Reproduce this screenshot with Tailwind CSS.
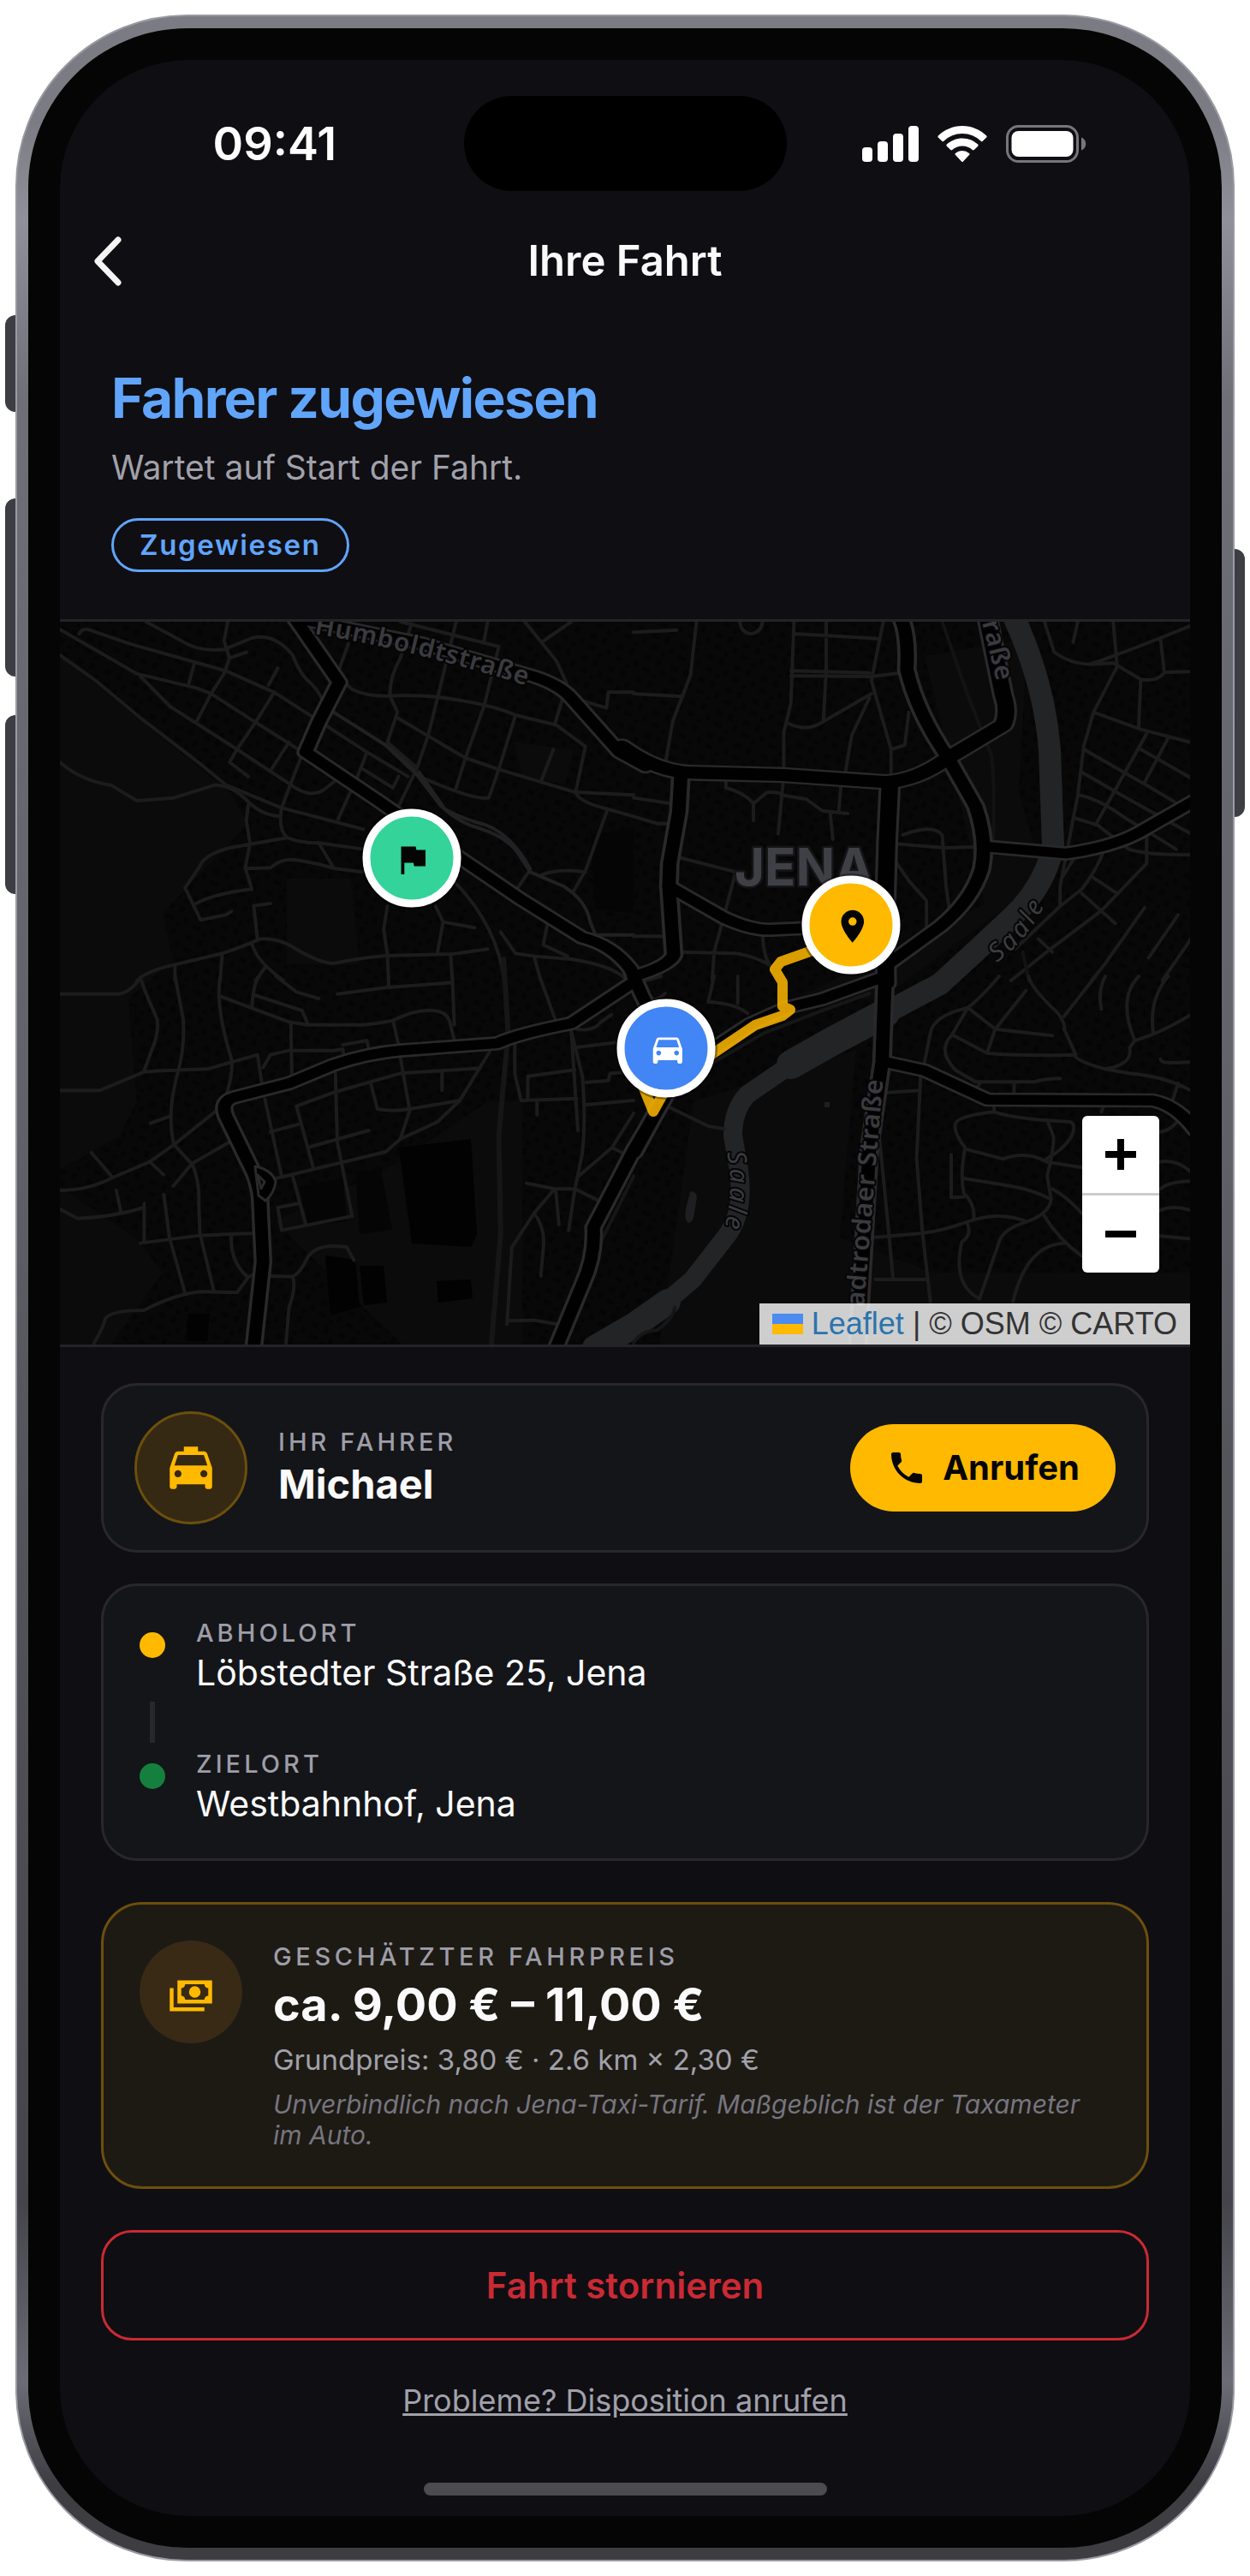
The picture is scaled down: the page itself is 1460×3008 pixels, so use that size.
<!DOCTYPE html>
<html lang="de">
  <head>
    <meta charset="UTF-8" />
    <meta name="viewport" content="width=device-width, initial-scale=1.0" />
    <title>Ihre Fahrt</title>
    <script src="https://cdn.jsdelivr.net/npm/@tailwindcss/browser@4"></script>
  </head>
  <body class="bg-white px-[18px] py-[17px] font-['Inter',sans-serif]">
    <div class="relative">
      <!-- side buttons -->
      <div class="absolute -left-3 top-[351px] h-[113px] w-4 rounded-l-xl bg-[#3d3e43]"></div>
      <div class="absolute -left-3 top-[565px] h-[208px] w-4 rounded-l-xl bg-[#3d3e43]"></div>
      <div class="absolute -left-3 top-[818px] h-[209px] w-4 rounded-l-xl bg-[#3d3e43]"></div>
      <div class="absolute -right-3 top-[624px] h-[313px] w-4 rounded-r-xl bg-[#3d3e43]"></div>

      <div
        class="relative rounded-[200px] border-2 border-[#9a9aa4] bg-[linear-gradient(180deg,#7b7b83_0%,#7b7b83_4%,#90909a_8%,#6f6f78_15%,#66666f_32%,#62626b_42%,#55565b_56%,#4a4a50_75%,#44444a_86%,#6c6c76_93%,#3d3d42_97%,#3d3d42_100%)] px-[13px] py-[14px]"
      >
        <div class="rounded-[186px] bg-[#050505] p-[37px]">
          <main class="overflow-hidden rounded-[150px] bg-[#0f0e13] text-[#fafafa]">
            <!-- status bar -->
            <div class="grid grid-cols-[1fr_377px_1fr] items-center pt-[42px]">
              <div class="pl-[30px] text-center text-[54px] font-semibold leading-[60px] text-white">
                09:41
              </div>
              <div class="h-[111px] rounded-full bg-black"></div>
              <div class="flex items-center justify-center gap-[22px] pr-8">
                <svg class="h-[42px] w-[66px]" viewBox="0 0 66 42" fill="#fff" aria-hidden="true">
                  <rect x="0" y="25" width="12" height="17" rx="4" />
                  <rect x="18" y="18" width="12" height="24" rx="4" />
                  <rect x="36" y="9" width="12" height="33" rx="4" />
                  <rect x="54" y="0" width="12" height="42" rx="4" />
                </svg>
                <svg class="h-[42px] w-[58px]" viewBox="0 0 58 42" fill="#fff" aria-hidden="true">
                  <path d="M29 0C18 0 8 4.500.8 11.500a1.500 1.500 0 0 0 0 2l4.400 4.300a1.500 1.500 0 0 0 2.100 0A31 31 0 0 1 29 9a31 31 0 0 1 21.700 8.800 1.500 1.500 0 0 0 2.100 0l4.400-4.300a1.500 1.500 0 0 0 0-2C50 4.500 40 0 29 0z" />
                  <path d="M29 14.500c-7 0-13.400 2.700-18.200 7.100a1.500 1.500 0 0 0 0 2.100l4.500 4.300a1.500 1.500 0 0 0 2 0A17.500 17.500 0 0 1 29 23.500c4.500 0 8.600 1.700 11.700 4.500a1.500 1.500 0 0 0 2 0l4.500-4.300a1.500 1.500 0 0 0 0-2.100A26.500 26.500 0 0 0 29 14.500z" />
                  <path d="M29 29c-3 0-5.800 1.100-8 2.900a1.400 1.400 0 0 0 0 2.100l7 7.400a1.400 1.400 0 0 0 2 0l7-7.400a1.400 1.400 0 0 0 0-2.100A12.500 12.500 0 0 0 29 29z" />
                </svg>
                <svg class="h-[44px] w-[94px]" viewBox="0 0 94 44" aria-hidden="true">
                  <rect x="1.500" y="1.500" width="82" height="41" rx="13" fill="none" stroke="#77777b" stroke-width="3" />
                  <rect x="6.500" y="7" width="72" height="30" rx="8" fill="#fff" />
                  <path d="M88 14.500c3 1 5.200 4 5.200 7.500S91 28.500 88 29.500z" fill="#77777b" />
                </svg>
              </div>
            </div>

            <!-- navigation -->
            <nav class="grid h-[164px] grid-cols-[1fr_auto_1fr] items-center px-[34px]">
              <button type="button" aria-label="Zurück" class="flex h-[66px] w-[44px] items-center justify-center">
                <svg class="h-[60px] w-[36px]" viewBox="0 0 36 60" fill="none" stroke="#f4f4f4" stroke-width="7" stroke-linecap="round" stroke-linejoin="round">
                  <path d="M30 5L6 30l24 25" />
                </svg>
              </button>
              <div class="text-[49px] font-semibold leading-[60px]">Ihre Fahrt</div>
            </nav>

            <!-- ride status -->
            <header class="border-b-[3px] border-[#242427] px-[60px] pb-[55px] pt-[39px]">
              <h1 class="text-[64px] font-bold leading-[78px] tracking-tight text-[#60a5fa]">Fahrer zugewiesen</h1>
              <p class="mt-[18px] text-[39px] leading-[48px] text-[#a1a1aa]">Wartet auf Start der Fahrt.</p>
              <span class="mt-[35px] inline-flex h-[63px] items-center rounded-full border-[3px] border-[#60a5fa] px-[30px] text-[33px] font-semibold leading-none tracking-wider text-[#60a5fa]">Zugewiesen</span>
            </header>

            <!-- map -->
            <section aria-label="Karte" class="relative h-[847px] overflow-hidden border-b-[3px] border-[#242427] bg-[#070707]">
              <svg class="h-full w-full" viewBox="0 0 1320 844" preserveAspectRatio="xMidYMid slice" fill="none" stroke-linecap="round" stroke-linejoin="round">
                <defs>
                  <pattern id="houses" width="34" height="28" patternUnits="userSpaceOnUse" patternTransform="rotate(22)">
                    <path fill="#050505" d="M2 3h8v6H2zM17 2h6v8h-6zM27 13h5v7h-5zM5 17h9v5H5zM19 21h5v5h-5z" />
                  </pattern>
                  <path id="p-humboldt" d="M297 14Q430 36 580 86" />
                  <path id="p-camburg" d="M1077 1Q1086 34 1101 100" />
                  <path id="p-saale-n" d="M1094 398Q1138 368 1164 300" />
                  <path id="p-saale-s" d="M779 620Q790 668 770 730" />
                  <path id="p-stadtroda" d="M939 800L966 480" />

                  <!-- street grid, one group per tile -->
                  <g id="major-nw">
                    <path d="M655 20L775 245L720 385L685 490L880 660L1100 860L1270 1010L1430 1140Q1510 1165 1560 1250L1590 1340L1650 1500" />
                    <path d="M660 20L1000 110L1300 225Q1370 255 1400 300L1530 490L1600 540" />
                  </g>
                  <g id="major-ne">
                    <path d="M680 20Q700 80 695 200Q720 350 800 510L870 680Q900 800 885 900Q860 1010 780 1100L640 1240" />
                    <path d="M120 580L115 700L92 880L90 960L102 1200Q90 1240 0 1275" />
                    <path d="M90 960L230 1070Q300 1115 350 1112L460 1105" />
                    <path d="M890 820L1100 845Q1230 820 1300 760L1440 650" />
                  </g>
                  <g id="main-ne">
                    <path d="M-30 470Q60 560 150 562L380 570L640 595Q720 590 800 510L940 395Q955 350 940 290L900 20" />
                    <path d="M652 600L645 800L640 1040L642 1300" />
                  </g>
                  <g id="major-sw">
                    <path d="M1568 20L1400 165Q1260 200 1200 235L940 260Q850 270 760 310L640 375L490 425Q455 440 470 490L545 690Q560 740 562 780L570 1000L545 1300" />
                    <path d="M1650 430L1568 610L1460 880Q1465 980 1430 1080L1360 1300" />
                  </g>
                  <g id="major-se">
                    <path d="M640 0L480 80L390 110L300 165L150 300L80 420L0 620" />
                    <path d="M640 0L632 300L600 600L570 1300" />
                    <path d="M640 300L740 330L900 432L1320 435Q1380 450 1430 540" />
                  </g>
                </defs>

                <rect width="1320" height="844" fill="#080808" />
                <rect width="1320" height="844" fill="url(#houses)" />
                <path fill="#0b0b0b" d="M0 39L200 200L220 236L120 340L132 396L80 440L90 560L70 600L0 640zM265 300L340 300L350 400L265 400zM1010 40L1130 20L1120 200L1150 300L960 440L860 440L1080 330zM740 560L930 500L900 844L700 844zM860 700L1020 760L1320 760V844H800zM530 140L600 150L590 190L540 180zM0 660L90 720L120 760L60 844H0zM500 560L540 560V844H400L250 700L380 640z" />
                <path fill="#020202" d="M396 614L480 604L487 716L480 730L411 726zM310 740L345 745L350 800L316 810zM350 752L378 752L382 795L355 798zM150 808L175 808L172 840H148zM440 770L480 768L482 790L442 795z" />
                <path fill="#050505" d="M620 250L670 240V340L625 335zM345 642L375 640L388 710L350 715zM280 660L330 650L335 700L290 705z" />

                <!-- river -->
                <g stroke="#232426">
                  <path stroke-width="26" d="M1112 -10Q1150 70 1156 150L1160 262Q1150 310 1111 346L1065 389L1028 423L964 457" />
                  <path stroke-width="34" d="M964 457L900 491L854 517" />
                  <path stroke-width="22" d="M854 517L803 552Q786 570 786 600L793 640Q800 690 778 718L739 768L698 803" />
                  <path stroke-width="30" d="M710 794L670 822L625 848" />
                </g>
                <path fill="#1f1f21" d="M736 666q6-3 8 6l-3 18q-1 12-7 12-5-3-3-16zM893 561h6v6h-6z" />

                <!-- side streets -->
                <g stroke="#1c1c1d" stroke-width="4">
                  <g transform="translate(-10 -11) scale(.4337 .3333)">
                    <path vector-effect="non-scaling-stroke" d="M23 60L230 215L390 265L430 285L550 385L665 480M75 75Q85 50 110 65L210 110L470 205L600 280L720 380L850 490L960 575M23 150L120 240L240 370L400 530L470 605L620 685L840 760M255 33L350 100Q400 140 465 130L540 90Q600 70 650 150Q670 220 700 250Q730 290 735 330M475 33L465 100L480 160L465 215L430 285L390 385M525 140L480 160M385 180L370 250M610 195L585 255M600 280L550 385L500 480L480 525L530 575M240 225L320 330L500 480L640 600Q700 660 740 615L770 585M640 455L590 555M670 515L620 685Q610 760 635 790Q680 810 720 808L840 830" />
                    <path vector-effect="non-scaling-stroke" d="M23 525Q80 590 160 605L230 660L330 650L440 605Q480 605 520 650Q560 710 615 715M530 675L525 730L535 810L522 895L540 970Q440 985 390 1020M635 790L480 825Q410 850 400 890L360 965L402 1078L470 1060L485 1048M720 808L760 895M525 898L590 895Q620 860 660 868Q720 880 760 897L838 910M590 1020L545 1028L555 1145M230 1290Q260 1255 330 1235L460 1195Q520 1170 560 1145Q600 1140 640 1165Q720 1230 760 1230Q830 1210 900 1203L1080 1197L1175 1180M540 1160Q550 1220 625 1290M575 1245L550 1290M333 1240V1290M460 1195L455 1290M905 1030L895 1110L905 1200L908 1290" />
                    <path vector-effect="non-scaling-stroke" d="M800 110L775 200Q780 240 810 270Q850 295 910 293Q1000 285 1100 308Q1200 330 1250 360L1360 395L1438 470L1412 630Q1420 665 1500 690L1568 715M970 40L940 160Q910 230 912 293L932 350L905 455L985 545L935 680M1090 33L1040 300L1015 430L985 545M940 33L1205 120L1165 330L1115 510L1090 615M1175 33L1165 100M932 370L1115 510L1205 550L1410 630L1568 640M1250 360L1205 550L1178 650Q1140 660 1000 580M1352 480L1318 595M1375 310L1355 395M1275 33L1360 170L1388 250M1400 33L1320 105M1500 280H1568M1500 280L1495 335L1430 310M850 490L820 590M805 630L772 725M840 550L920 615L935 575M1495 700L1440 900L1405 980M1320 920Q1370 895 1438 910M1285 910L1248 980M1340 1065L1325 1165L1390 1205M1090 950Q1200 1100 1220 1290M1035 1030L1055 1085L1140 1105M1055 1085L1040 1190M1075 1197L1080 1290M1210 1120L1250 1195L1300 1205L1400 1215Q1520 1240 1550 1290M1300 1205L1318 1290" />
                    <path stroke="#212123" vector-effect="non-scaling-stroke" d="M760 350L900 465L985 570L1050 680Q1100 740 1160 760Q1230 790 1260 850L1290 910L1380 960Q1440 1010 1450 1080L1465 1130H1568M910 475L975 550M990 560L1060 690Q1110 725 1170 745Q1240 780 1290 900" />
                  </g>
                  <g transform="translate(670 -11) scale(.4592 .3333)">
                    <path vector-effect="non-scaling-stroke" d="M0 70L110 62M160 33L145 220L100 380L82 520M408 33L400 320L382 420V550M408 75L620 92M490 33V200L483 380M400 205L600 212M400 222L605 225L680 212M635 33L605 240L655 480V565M395 390Q440 420 480 385L605 285M600 300L555 430L535 590M700 350L690 465L655 480M0 285L125 295M270 33Q275 75 300 75Q325 70 328 33M235 590V615Q280 630 305 670L340 630Q380 630 375 640L440 655L480 695L545 705M305 670V730M380 600L368 775M528 600L522 695M500 700L507 795M105 855L260 910L205 1190L200 1290M115 1190L260 1195Q320 1210 350 1240M0 1135H90M330 1110Q325 1180 345 1235M660 860L700 940L745 1010V1120M660 810L790 825L870 822M685 780Q760 740 785 780L795 960L805 1060M0 650L95 670M0 715L60 740H100" />
                    <path vector-effect="non-scaling-stroke" d="M1045 33L1070 140Q1110 180 1160 182Q1230 150 1340 90L1430 40M1220 33L1230 190L1170 350L1145 470L1130 640L1085 960V1030M1130 33L1118 105M1340 90L1350 210L1430 207M1160 182L1220 178L1290 235Q1330 245 1350 212M1290 235L1285 400M1170 350L1290 410L1430 460M1145 480L1310 610L1395 680M1140 560L1240 640L1430 785M1305 425L1175 745M1290 480L1430 590M1360 440L1300 595M1130 640Q1180 650 1250 720L1310 770L1380 830M1120 720L1180 745L1260 830Q1300 850 1430 850M1130 840L1090 930M1200 820Q1180 900 1140 970L1085 1030L970 1180M1305 770V880L1190 1045L1060 1180L960 1290M1140 985L1225 1090M1170 930L1230 985M1030 1145L1065 1190M1300 1035L1200 1230L1165 1290M1385 1060L1310 1210M1430 1120L1345 1290" />
                    <path stroke="#131313" vector-effect="non-scaling-stroke" d="M785 33L850 290L910 500Q920 600 915 800M990 1190L1005 1290" />
                  </g>
                  <g transform="translate(-10 414) scale(.4337 .3333)">
                    <path vector-effect="non-scaling-stroke" d="M23 62H180Q210 60 240 5Q250 50 285 150Q290 200 270 260L250 330M333 0L355 150Q360 250 340 340Q310 480 330 590L380 660Q400 720 397 800L400 900L437 1100M455 0Q440 100 485 290Q490 340 470 420M23 400H130L250 335Q300 330 420 325L555 275L568 385M23 750Q100 750 165 705L265 650L330 590L450 465M455 70L640 160L690 170H840Q880 165 920 155Q990 110 1040 122Q1070 130 1075 170L1090 250M545 65L675 120L690 165M560 0Q545 20 540 105M605 0L660 55L720 78M770 62L900 40L1080 22M908 0V35M1080 0L1085 170M645 165L648 380M570 320L590 275L640 260H760L785 255L790 300M785 240L850 225L855 260M920 155L935 240M940 285L965 470L940 570M765 340L770 580L810 840L620 890L610 810L670 795" />
                    <path vector-effect="non-scaling-stroke" d="M660 455L765 405L940 340L1155 322M660 455L705 670M590 545L670 517M575 430L620 700M698 597L855 540M605 708L900 615L940 570L1040 510L1100 435L1180 265M860 375L878 465Q920 475 965 465L1100 435M1052 330V400M650 700L685 870M1248 230V340L1265 435L1415 428M1283 435V350L1410 328M1308 440V485M1315 0L1362 170M1395 165L1430 350Q1440 500 1430 620L1410 745L1393 890M1410 250L1520 232M1400 190L1418 540M1440 372L1500 365L1505 340L1568 335M1440 450L1568 435M1415 185Q1460 195 1480 160L1508 135M1568 480L1510 600L1420 700M1510 600L1555 630M1280 725L1355 745H1410L1495 800M1355 745L1300 830L1240 950L1227 1220M1300 830Q1330 880 1325 950L1318 1050M1358 745L1367 870M1227 1207L1300 1205L1375 1222" />
                    <path vector-effect="non-scaling-stroke" d="M240 935L400 908L550 900M303 765L318 915L360 1110M485 908Q480 1000 530 1055M115 1285Q140 1230 145 1200Q160 1170 250 1170Q330 1115 400 1105L500 1108L530 1055L550 1040M250 795V930M23 815L70 848Q160 845 250 810M175 750L187 825M108 618L165 705M265 650L302 695M267 515L320 490M497 568L380 655L328 735M585 1050L650 1052Q670 1040 690 985Q710 945 760 945L795 948L815 995M650 1052Q660 1090 640 1160L632 1285" />
                    <path stroke="#161617" stroke-width="6" vector-effect="non-scaling-stroke" d="M1218 -60L1230 200L1205 560L1210 900L1185 1290" />
                    <path stroke="#161617" vector-effect="non-scaling-stroke" d="M1568 700L1480 930Q1470 1010 1440 1110L1380 1290" />
                  </g>
                  <g transform="translate(670 414) scale(.4592 .3333)">
                    <path vector-effect="non-scaling-stroke" d="M20 30L25 80Q60 90 80 60M20 20L70 0M205 0L190 90Q260 95 290 130M265 0V95M85 455L190 525L230 535M640 408L725 400M730 350L720 640L735 900L755 1140M625 560L650 910L660 1060M610 915L735 900Q790 890 850 860Q930 820 1000 860Q1060 830 1062 780L1052 700Q1070 600 1068 560L1052 505M615 1062H745M930 0Q880 80 850 110Q760 140 755 200L740 300M850 110L920 185L1065 208M998 50L920 185L900 265M850 110L810 205L900 270Q1000 280 1120 275Q1130 300 1200 325Q1270 310 1262 250L1275 225Q1340 200 1417 135M810 205Q770 260 820 330L870 370H1020Q1040 360 1085 358" />
                    <path vector-effect="non-scaling-stroke" d="M1005 0Q1010 40 1080 130Q1100 170 1095 185M1175 0L1095 140M1095 185L1125 275M1200 0Q1180 50 1190 115M1285 0Q1230 80 1275 225M1360 0Q1310 80 1322 200M1200 325L1260 340Q1350 350 1417 400M880 375L865 415M968 375V435M1385 375L1365 460M917 435V475M1200 435L1190 475M917 475Q820 490 818 520Q815 550 843 600Q830 700 840 760Q870 800 865 850M917 475Q960 495 1052 505L1110 510Q1130 520 1110 570Q1090 610 1050 640M843 605L940 640Q1000 610 1050 650L1140 670M840 708L960 735Q1020 750 1060 780M808 625V775L840 773M1065 745Q1100 770 1140 830M1045 840Q1080 920 1140 980M1000 860Q940 885 930 930L880 1130M850 870Q860 910 835 930Q810 1080 880 1130M1095 935Q1000 940 965 1140M1340 545Q1370 540 1390 495M1340 650Q1380 640 1417 685M1340 745Q1360 720 1417 718M1340 820Q1370 800 1417 820M1340 910L1417 920M1340 290Q1340 310 1417 300" />
                    <path vector-effect="non-scaling-stroke" d="M600 60L480 120L330 200L180 320L90 430M0 1285Q20 1240 60 1240Q100 1200 105 1160" stroke="#161617" />
                  </g>
                </g>

                <!-- road casing, then road surface -->
                <g stroke="#29292b" stroke-width="50">
                  <g transform="translate(-10 -11) scale(.4337 .3333)"><use href="#major-nw" /></g>
                  <g transform="translate(670 -11) scale(.4592 .3333)"><use href="#major-ne" /></g>
                  <g transform="translate(-10 414) scale(.4337 .3333)"><use href="#major-sw" /></g>
                  <g transform="translate(670 414) scale(.4592 .3333)"><use href="#major-se" /></g>
                  <g stroke-width="56" transform="translate(670 -11) scale(.4592 .3333)"><use href="#main-ne" /></g>
                </g>
                <g stroke="#010101" stroke-width="34">
                  <g transform="translate(-10 -11) scale(.4337 .3333)"><use href="#major-nw" /></g>
                  <g transform="translate(670 -11) scale(.4592 .3333)"><use href="#major-ne" /></g>
                  <g transform="translate(-10 414) scale(.4337 .3333)"><use href="#major-sw" /></g>
                  <g transform="translate(670 414) scale(.4592 .3333)"><use href="#major-se" /></g>
                  <g stroke-width="42" transform="translate(670 -11) scale(.4592 .3333)"><use href="#main-ne" /></g>
                </g>
                <path stroke="#29292b" stroke-width="3" fill="#010101" d="M228 636Q248 640 252 654Q250 668 240 676L232 670z" />
                <path stroke="#29292b" stroke-width="3" d="M231 646L239 654L235 662z" />

                <!-- place names -->
                <g font-family="'Noto Sans', sans-serif" font-size="30" font-weight="600" fill="#3a3a3f" stroke="#050505" stroke-width="4" paint-order="stroke" letter-spacing="1">
                  <text><textPath href="#p-humboldt">Humboldtstraße</textPath></text>
                  <text><textPath href="#p-camburg">raße</textPath></text>
                  <text><textPath href="#p-stadtroda">adtrodaer Straße</textPath></text>
                  <g font-style="italic" font-weight="400" letter-spacing="4">
                    <text><textPath href="#p-saale-n">Saale</textPath></text>
                    <text><textPath href="#p-saale-s">Saale</textPath></text>
                  </g>
                </g>
                <text x="788" y="308" font-family="Inter, sans-serif" font-size="60" font-weight="700" fill="#3f3f46" stroke="#151517" stroke-width="5" paint-order="stroke">JENA</text>

                <!-- route -->
                <path stroke="#ffb900" stroke-opacity=".85" stroke-width="12" d="M924 368L842 397L835 406L844 421V449L853 453L844 460L812 471L766 502L708 545L693 572L680 540L708 498" />

                <!-- destination -->
                <g transform="translate(411 276)">
                  <circle r="60" fill="#000" fill-opacity=".35" />
                  <circle r="53" fill="#34d399" stroke="#fff" stroke-width="9" />
                  <path transform="translate(-22 -21) scale(1.900)" fill="#050505" d="M14.400 6L14 4H5v17h2v-7h5.600l.4 2h7V6z" />
                </g>
                <!-- pickup -->
                <g transform="translate(924 354)">
                  <circle r="60" fill="#000" fill-opacity=".35" />
                  <circle r="53" fill="#ffb900" stroke="#fff" stroke-width="9" />
                  <path transform="translate(-21 -21) scale(1.900)" fill="#050505" d="M12 2C8.130 2 5 5.130 5 9c0 5.250 7 13 7 13s7-7.750 7-13c0-3.870-3.130-7-7-7zm0 9.500a2.500 2.500 0 0 1 0-5 2.500 2.500 0 0 1 0 5z" />
                </g>
                <!-- driver -->
                <g transform="translate(708 498)">
                  <circle r="60" fill="#000" fill-opacity=".35" />
                  <circle r="53" fill="#4285f4" stroke="#fff" stroke-width="9" />
                  <path transform="translate(-21 -22) scale(1.900)" fill="#fff" d="M18.920 6.010C18.720 5.420 18.160 5 17.500 5h-11c-.66 0-1.210.42-1.420 1.010L3 12v8c0 .55.45 1 1 1h1c.55 0 1-.45 1-1v-1h12v1c0 .55.45 1 1 1h1c.55 0 1-.45 1-1v-8l-2.080-5.990zM6.500 16c-.83 0-1.500-.67-1.500-1.500S5.670 13 6.500 13s1.500.67 1.500 1.500S7.330 16 6.500 16zm11 0c-.83 0-1.500-.67-1.500-1.500s.67-1.500 1.500-1.500 1.500.67 1.500 1.500-.67 1.500-1.500 1.500zM5 11l1.500-4.500h11L19 11H5z" />
                </g>
              </svg>

              <div class="absolute bottom-[84px] right-9 flex w-[90px] flex-col overflow-hidden rounded-md bg-white">
                <button type="button" aria-label="Vergrößern" class="flex h-[93px] items-center justify-center border-b-[3px] border-[#cccccc]">
                  <svg class="h-9 w-9" viewBox="0 0 36 36" stroke="#000" stroke-width="8"><path d="M0 18h36M18 0v36" /></svg>
                </button>
                <button type="button" aria-label="Verkleinern" class="flex h-[90px] items-center justify-center">
                  <svg class="h-9 w-9" viewBox="0 0 36 36" stroke="#000" stroke-width="8"><path d="M0 18h36" /></svg>
                </button>
              </div>
              <div class="absolute bottom-0 right-0 flex h-12 items-center bg-white/80 px-[15px] font-['Liberation_Sans',sans-serif] text-[36px] leading-[48px] text-[#333333]">
                <svg class="mr-2.5 h-6 w-9" viewBox="0 0 36 24" aria-hidden="true"><path fill="#4c8bf0" d="M0 0h36v12H0z" /><path fill="#ffb900" d="M0 12h36v12H0z" /></svg>
                <a href="#" class="text-[#2a74ad]">Leaflet</a>
                <span class="whitespace-pre"> | © OSM © CARTO</span>
              </div>
            </section>

            <div class="px-12 pb-6 pt-[42px]">
              <!-- driver -->
              <section class="flex items-center gap-9 rounded-[42px] border-[3px] border-[#28282c] bg-[#141519] px-9 py-[30px]">
                <div class="flex h-[132px] w-[132px] items-center justify-center rounded-full border-[3px] border-[#6b4f0c] bg-[#352914]">
                  <svg class="h-[66px] w-[66px]" viewBox="0 0 24 24" fill="#ffb900" aria-hidden="true">
                    <path d="M18.920 6.010C18.720 5.420 18.160 5 17.500 5H15V3H9v2H6.500c-.66 0-1.210.42-1.420 1.010L3 12v8c0 .55.45 1 1 1h1c.55 0 1-.45 1-1v-1h12v1c0 .55.45 1 1 1h1c.55 0 1-.45 1-1v-8l-2.080-5.990zM6.500 16c-.83 0-1.500-.67-1.500-1.500S5.670 13 6.500 13s1.500.67 1.500 1.500S7.330 16 6.500 16zm11 0c-.83 0-1.500-.67-1.500-1.500s.67-1.500 1.500-1.500 1.500.67 1.500 1.500-.67 1.500-1.500 1.500zM5 11l1.500-4.500h11L19 11H5z" />
                  </svg>
                </div>
                <div class="flex-1">
                  <p class="text-[29px] font-medium uppercase leading-[38px] tracking-[0.14em] text-[#9e9da8]">Ihr Fahrer</p>
                  <h2 class="text-[47px] font-bold leading-[60px]">Michael</h2>
                </div>
                <button type="button" class="flex h-[102px] items-center gap-[18px] rounded-full bg-[#ffb900] px-[42px] text-[40px] font-bold text-[#050505]">
                  <svg class="h-12 w-12" viewBox="0 0 24 24" fill="currentColor" aria-hidden="true">
                    <path d="M6.620 10.790c1.440 2.830 3.760 5.140 6.590 6.590l2.200-2.200c.27-.27.67-.36 1.020-.24 1.120.37 2.330.57 3.570.57.55 0 1 .45 1 1V20c0 .55-.45 1-1 1-9.390 0-17-7.610-17-17 0-.55.45-1 1-1h3.500c.55 0 1 .45 1 1 0 1.250.2 2.450.57 3.570.11.35.03.74-.25 1.020l-2.200 2.200z" />
                  </svg>
                  Anrufen
                </button>
              </section>

              <!-- addresses -->
              <section class="mt-9 rounded-[42px] border-[3px] border-[#28282c] bg-[#141519] px-[42px] py-9">
                <div class="flex gap-9">
                  <span class="mt-[18px] h-[30px] w-[30px] rounded-full bg-[#ffb900]"></span>
                  <div>
                    <p class="text-[29px] font-medium uppercase leading-[38px] tracking-[0.14em] text-[#9e9da8]">Abholort</p>
                    <p class="text-[41px] leading-[55px]">Löbstedter Straße 25, Jena</p>
                  </div>
                </div>
                <div class="mx-3 my-1.5 h-12 w-1.5 bg-[#28282c]"></div>
                <div class="flex gap-9">
                  <span class="mt-[18px] h-[30px] w-[30px] rounded-full bg-[#15803d]"></span>
                  <div>
                    <p class="text-[29px] font-medium uppercase leading-[38px] tracking-[0.14em] text-[#9e9da8]">Zielort</p>
                    <p class="text-[41px] leading-[55px]">Westbahnhof, Jena</p>
                  </div>
                </div>
              </section>

              <!-- fare estimate -->
              <section class="mt-12 flex gap-9 rounded-[48px] border-[3px] border-[#6b4f0c] bg-[#1d1a14] p-[42px]">
                <div class="flex h-[120px] w-[120px] shrink-0 items-center justify-center rounded-full bg-[#382a15]">
                  <svg class="h-[54px] w-[54px]" viewBox="0 0 24 24" fill="#ffb900" aria-hidden="true">
                    <path d="M5 6h18v12H5V6m9 3a3 3 0 0 1 3 3 3 3 0 0 1-3 3 3 3 0 0 1-3-3 3 3 0 0 1 3-3M9 8a2 2 0 0 1-2 2v4a2 2 0 0 1 2 2h10a2 2 0 0 1 2-2v-4a2 2 0 0 1-2-2H9m-8 2h2v10h16v2H1V10z" />
                  </svg>
                </div>
                <div>
                  <p class="text-[29px] font-medium uppercase leading-[38px] tracking-[0.16em] text-[#9e9da8]">Geschätzter Fahrpreis</p>
                  <p class="text-[54px] font-bold leading-[74px]">ca. 9,00 € – 11,00 €</p>
                  <p class="mt-1.5 text-[33px] leading-[42px] text-[#a1a1aa]">Grundpreis: 3,80 € · 2.6 km × 2,30 €</p>
                  <p class="mt-[13px] text-[30px] italic leading-9 text-[#76757f]">Unverbindlich nach Jena-Taxi-Tarif. Maßgeblich ist der Taxameter im Auto.</p>
                </div>
              </section>

              <button type="button" class="mt-12 h-[129px] w-full rounded-[36px] border-[3px] border-[#c92a33] text-[42px] font-semibold text-[#c92a33]">
                Fahrt stornieren
              </button>
              <div class="mt-[46px] text-center">
                <a href="#" class="text-[36px] leading-[48px] text-[#a1a1aa] underline">Probleme? Disposition anrufen</a>
              </div>
              <div class="mx-auto mt-[72px] h-[15px] w-[471px] rounded-full bg-[#4b4b50]"></div>
            </div>
          </main>
        </div>
      </div>
    </div>
  </body>
</html>
